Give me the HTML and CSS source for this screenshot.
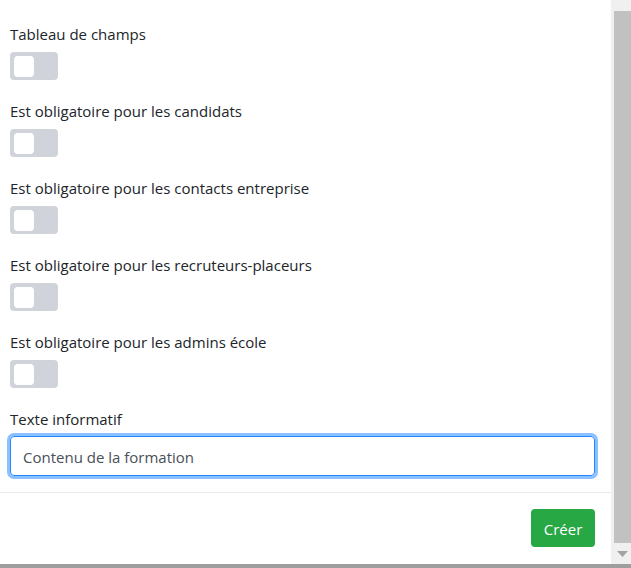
FILE: index.html
```html
<!DOCTYPE html>
<html lang="fr">
<head>
<meta charset="utf-8">
<title>Formulaire</title>
<link rel="stylesheet" href="styles.css">
</head>
<body>
<div class="window">
  <div class="viewport">
    <form class="modal">
      <div class="modal-body">
        <div class="form-group">
          <label class="label">Tableau de champs</label>
          <span class="switch"><span class="knob"></span></span>
        </div>
        <div class="form-group">
          <label class="label">Est obligatoire pour les candidats</label>
          <span class="switch"><span class="knob"></span></span>
        </div>
        <div class="form-group">
          <label class="label">Est obligatoire pour les contacts entreprise</label>
          <span class="switch"><span class="knob"></span></span>
        </div>
        <div class="form-group">
          <label class="label">Est obligatoire pour les recruteurs-placeurs</label>
          <span class="switch"><span class="knob"></span></span>
        </div>
        <div class="form-group">
          <label class="label">Est obligatoire pour les admins école</label>
          <span class="switch"><span class="knob"></span></span>
        </div>
        <div class="form-group last">
          <label class="label">Texte informatif</label>
          <div class="input">Contenu de la formation</div>
        </div>
      </div>
      <div class="modal-footer">
        <button type="button" class="btn">Créer</button>
      </div>
    </form>
    <div class="scrollbar">
      <div class="sb-top"></div>
      <div class="sb-thumb"></div>
      <div class="sb-arrow"><svg width="11" height="6" viewBox="0 0 11 6"><path d="M0 0H11L5.5 6Z" fill="#a3a3a3"/></svg></div>
    </div>
  </div>
  <div class="bottom-bar"></div>
</div>
</body>
</html>
```
FILE: styles.css
```css
* { box-sizing: border-box; }
html, body { margin: 0; padding: 0; background: #fff; }
body {
  font-family: "Segoe UI", "Open Sans", "Noto Sans", sans-serif;
  font-size: 15px;
  color: #212529;
}
.window { width: 631px; height: 568px; display: flex; flex-direction: column; overflow: hidden; }
.viewport { flex: 1; display: flex; min-height: 0; }
.modal { flex: 1; display: flex; flex-direction: column; min-width: 0; }
.modal-body { padding: 22px 16px 16px 10px; border-bottom: 1px solid #e9ecef; }
.form-group { margin-bottom: 19px; }
.form-group.last { margin-bottom: 0; }
.label { display: block; line-height: 24px; height: 24px; margin-bottom: 6px; white-space: nowrap; }
.form-group.last .label { margin-bottom: 5px; }
.switch {
  display: flex; align-items: center;
  width: 48px; height: 28px; border-radius: 4px;
  background: #d0d4da; padding: 0 4px;
}
.knob { width: 20px; height: 21px; border-radius: 4px; background: #fff; }
.input {
  height: 40px; width: 585px;
  border: 1px solid #2684ff;
  border-radius: 4px;
  padding: 1px 12px 0;
  line-height: 38px;
  color: #495057;
  font-size: 15px;
  box-shadow: 0 0 0 3px #8cc1ff;
}
.modal-footer { flex: 1; display: flex; justify-content: flex-end; align-items: flex-start; padding: 16px 16px 0 0; }
.btn {
  width: 64px; height: 38px; border: 0; border-radius: 4px;
  background: #28a745; color: #fff;
  font-family: inherit; font-size: 15px; padding: 2px 0 0;
}
.scrollbar { width: 20px; background: #f0f0f0; display: flex; flex-direction: column; align-items: center; }
.sb-top { height: 11px; }
.sb-thumb { width: 17px; margin-left: 3px; height: 532px; background: #c1c1c1; }
.sb-arrow { flex: 1; display: flex; align-items: center; justify-content: center; padding-left: 2px; }
.sb-arrow svg { display: block; }
.bottom-bar { height: 4px; background: #9e9e9e; flex: none; }
```
